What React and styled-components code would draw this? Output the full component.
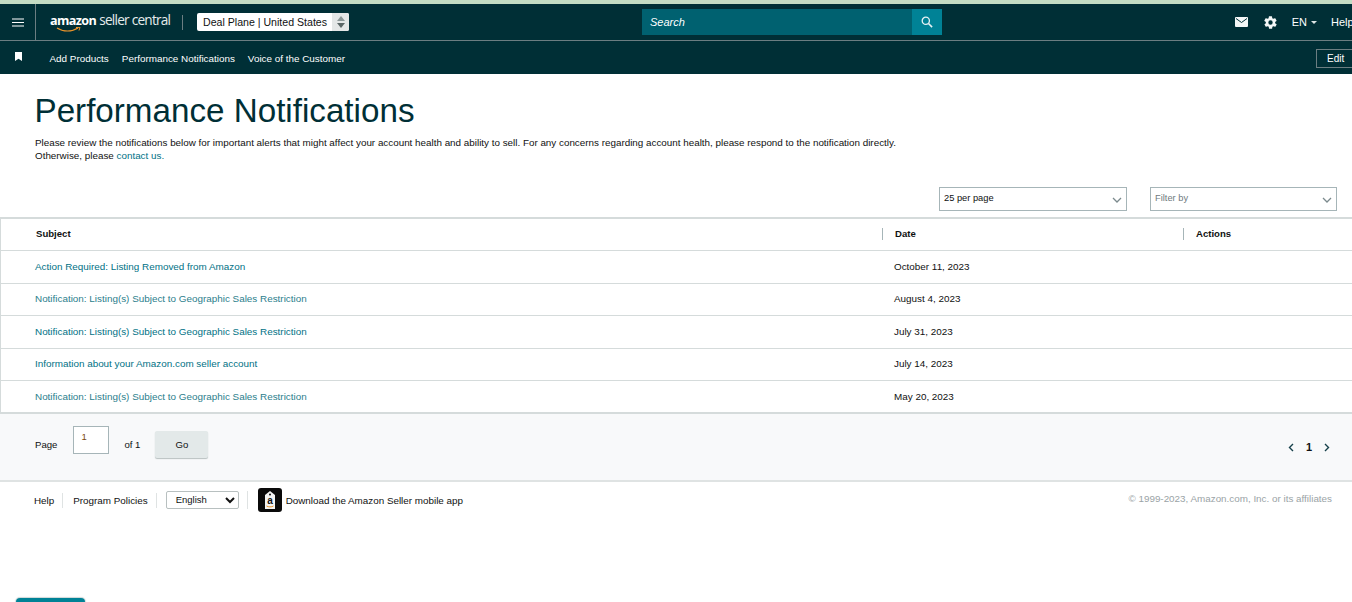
import React from "react";
import styled, { createGlobalStyle } from "styled-components";

const Global = createGlobalStyle`
  html, body { margin: 0; padding: 0; height: 100%; overflow: hidden; background: #fff; }
  body { font-family: "Liberation Sans", Arial, sans-serif; color: #002f36; }
  * { box-sizing: border-box; }
`;

const Page = styled.div`
  width: 1352px; height: 602px; overflow: hidden; position: relative;
  display: flex; flex-direction: column;
`;
const TopStrip = styled.div`height: 4px; background: #c4dcc4; flex: none;`;
const Header = styled.header`background: #002f36; color: #fff; flex: none;`;
const NavMain = styled.div`
  height: 37px; display: flex; align-items: center; position: relative;
  border-bottom: 1px solid #6c7e82;
`;
const Burger = styled.div`
  width: 36px; height: 36px; flex: none; display: flex; align-items: center; justify-content: center;
  border-right: 1px solid #6c7e82;
`;
const Logo = styled.div`
  margin-left: 14px; width: 119px; position: relative; display: flex; align-items: baseline;
  height: 24px; padding-top: 1px; line-height: 18px;
`;
const LogoStrong = styled.span`font: 700 12.6px/18px "Open Sans", sans-serif; letter-spacing: -0.6px;`;
const LogoLight = styled.span`font: 400 13.6px/18px "Open Sans", sans-serif; margin-left: 3px; color: #e6ecec; letter-spacing: -0.75px; white-space: nowrap;`;
const Smile = styled.svg`position: absolute; left: 6px; top: 17px;`;
const VDivider = styled.div`width: 1px; height: 15px; background: #6c7e82; margin-left: 13px;`;
const AccountSwitch = styled.div`
  margin-left: 14px; width: 152px; height: 18px; background: #fff; border-radius: 2px; color: #0f1111;
  display: flex; align-items: center; font-size: 10.6px; padding-left: 6px; position: relative; white-space: nowrap;
`;
const Stepper = styled.div`
  position: absolute; right: 0; top: 0; width: 17px; height: 18px; background: #e4e7e7; border-radius: 0 2px 2px 0;
  display: flex; flex-direction: column; align-items: center; justify-content: center; gap: 2px;
`;
const Tri = styled.div`
  width: 0; height: 0; border-left: 4px solid transparent; border-right: 4px solid transparent;
  ${p => p.$up ? "border-bottom: 5px solid #8b9696;" : "border-top: 5px solid #5a6666;"}
`;
const SearchBox = styled.div`
  position: absolute; left: 642px; top: 5px; width: 300px; height: 26px; display: flex; background: #006170;
`;
const SearchText = styled.div`flex: 1; font: italic 11px/26px "Liberation Sans", sans-serif; padding-left: 8px; color: #fff;`;
const SearchBtn = styled.div`width: 30px; background: #008296; display: flex; align-items: center; justify-content: center;`;
const RightTools = styled.div`
  margin-left: auto; display: flex; align-items: center; height: 100%; font-size: 11px; color: #fff;
`;
const Lang = styled.div`display: flex; align-items: center; margin-left: 14px; gap: 4px;`;
const Caret = styled.div`width: 0; height: 0; border-left: 3.5px solid transparent; border-right: 3.5px solid transparent; border-top: 3px solid #dfe5e5; margin-top: 1px;`;
const Help = styled.div`margin-left: 14px; width: 21px; overflow: hidden; white-space: nowrap;`;
const NavSub = styled.div`
  height: 33px; display: flex; align-items: center; font-size: 9.9px; position: relative;
`;
const Bookmark = styled.div`width: 36px; display: flex; justify-content: center; flex: none; margin-top: -2px;`;
const SubLinks = styled.div`display: flex; gap: 13px; margin-left: 13.5px; margin-top: 1px;`;
const EditBtn = styled.div`
  margin-left: auto; width: 36px; height: 19px; border: 1px solid #6c7e82; border-right: none;
  font-size: 10px; line-height: 17px; padding-left: 10px; margin-top: 1px;
`;

const Main = styled.main`padding: 18px 0 0 35px; flex: none; height: 143px; position: relative;`;
const Title = styled.h1`margin: 0 0 0 -0.5px; font-weight: 400; font-size: 33.2px; line-height: 38px; color: #002f36;`;
const Intro = styled.p`margin: 6px 0 0; font-size: 9.85px; line-height: 13px; color: #0f1111;`;
const A = styled.span`color: #007185;`;
const Controls = styled.div`
  position: absolute; right: 15px; top: 113px; display: flex; gap: 23px;
`;
const SelectBox = styled.div`
  height: 24px; width: ${p => p.$w}px; border: 1px solid #a6b5b8; background: #fff; position: relative;
  font-size: 9.3px; line-height: 20px; padding-left: 4px; color: ${p => p.$muted ? "#6f7a7e" : "#0f1111"};
`;
const Chev = styled.svg`position: absolute; right: 4px; top: 9px;`;

const Table = styled.section`
  flex: none; border-top: 2px solid #d5dbdb; border-left: 1px solid #d5dbdb; border-bottom: 2px solid #d5dbdb; height: 197px;
`;
const cols = "881px 301px 1fr";
const HeadRow = styled.div`
  display: grid; grid-template-columns: ${cols}; height: 32px; border-bottom: 1px solid #d5dbdb; align-items: center;
  font-size: 9.6px; font-weight: 700; color: #0f1111; padding-bottom: 2px;
`;
const HeadCell = styled.div`
  height: 12px; line-height: 12px; padding-left: ${p => p.$first ? 35 : 12}px;
  border-left: ${p => p.$first ? "none" : "1px solid #a6b5b8"};
`;
const Row = styled.div`
  display: grid; grid-template-columns: ${cols}; align-items: center; height: 32.5px; border-bottom: 1px solid #d5dbdb;
  font-size: 9.9px; padding-bottom: 1px;
  &:last-child { border-bottom: none; }
`;
const SubjectCell = styled.div`padding-left: 34px; color: ${p => p.$dim ? "#2b7e8c" : "#007185"};`;
const DateCell = styled.div`padding-left: 12px; color: #0f1111;`;

const Pager = styled.div`
  flex: none; height: 68px; background: #f8f9fa; border-bottom: 2px solid #dfe3e3; display: flex; align-items: center;
  padding: 0 22px 6px 35px; font-size: 9.6px; color: #0f1111; position: relative;
`;
const PageInput = styled.div`
  width: 36px; height: 28px; margin: -8px 0 0 16px; border: 1px solid #a6b5b8; background: #fff; padding: 4px 0 0 7px; font-size: 9.5px; line-height: 12px; color: #7a4a10;
`;
const Of = styled.span`margin-left: 15px;`;
const GoBtn = styled.div`
  width: 53px; height: 27px; margin: 0 0 0 15px; background: #e3e9e9; border-radius: 2px; text-align: center;
  line-height: 27px; box-shadow: 0 1px 1px #b8c0c0;
`;
const Pages = styled.div`
  margin-left: auto; display: flex; align-items: center; gap: 12px; font-weight: 700; font-size: 11px; margin-top: 6px;
`;

const Footer = styled.footer`
  flex: none; height: 40px; display: flex; align-items: center; padding: 0 20px 2px 34px; font-size: 9.85px; color: #0f1111;
  margin-top: -1px;
`;
const FootItem = styled.span`
  padding-right: 8px; margin-right: ${p => p.$tight ? 9 : 10}px; border-right: 1px solid #dfe3e3; line-height: 15px; display: inline-block;
`;
const LangSel = styled.div`
  width: 73px; height: 18px; border: 1px solid #b8c0c0; border-radius: 2px; padding-left: 9px; line-height: 15px;
  position: relative; background: #fff; margin-right: 8px; font-size: 9.5px;
`;
const AppIcon = styled.div`
  width: 24px; height: 24px; background: #0a0a0a; border-radius: 3px; margin: 0 4px 0 10px; display: flex; align-items: center; justify-content: center;
`;
const VLine = styled.div`width: 1px; height: 18px; background: #dfe3e3;`;
const Copy = styled.div`margin-left: auto; color: #9aa3a6; margin-top: -4px;`;
const FloatBtn = styled.div`
  position: absolute; left: 16px; bottom: -20px; width: 69px; height: 24px; border-radius: 4px; background: #008296;
  box-shadow: 0 0 1px 1px #cfd8d8;
`;

const rows = [
  ["Action Required: Listing Removed from Amazon", "October 11, 2023"],
  ["Notification: Listing(s) Subject to Geographic Sales Restriction", "August 4, 2023", true],
  ["Notification: Listing(s) Subject to Geographic Sales Restriction", "July 31, 2023"],
  ["Information about your Amazon.com seller account", "July 14, 2023"],
  ["Notification: Listing(s) Subject to Geographic Sales Restriction", "May 20, 2023", true],
];

const ChevDown = ({ c = "#7b8a8d" }) => (
  <Chev width="10" height="7" viewBox="0 0 10 7"><path d="M1 1l4 4 4-4" fill="none" stroke={c} strokeWidth="1.3" /></Chev>
);

export default function App() {
  return (
    <Page>
      <Global />
      <TopStrip />
      <Header>
        <NavMain>
          <Burger>
            <svg width="12" height="9" viewBox="0 0 12 9"><path d="M0 1h12M0 4.5h12M0 8h12" stroke="#fff" strokeWidth="1.2" /></svg>
          </Burger>
          <Logo>
            <LogoStrong>amazon</LogoStrong>
            <LogoLight>seller central</LogoLight>
            <Smile width="26" height="6" viewBox="0 0 26 6">
              <path d="M1 1c6 4 15 4 21 0" fill="none" stroke="#f0962a" strokeWidth="1.2" />
              <path d="M20 0.5l4 -.2-1 3.2" fill="none" stroke="#f0962a" strokeWidth="1" />
            </Smile>
          </Logo>
          <VDivider />
          <AccountSwitch>
            Deal Plane | United States
            <Stepper><Tri $up /><Tri /></Stepper>
          </AccountSwitch>
          <SearchBox>
            <SearchText>Search</SearchText>
            <SearchBtn>
              <svg width="12" height="12" viewBox="0 0 12 12"><circle cx="4.8" cy="4.8" r="3.6" fill="none" stroke="#e8f2f4" strokeWidth="1.3" /><path d="M7.5 7.5l3.6 3.6" stroke="#e8f2f4" strokeWidth="1.6" /></svg>
            </SearchBtn>
          </SearchBox>
          <RightTools>
            <svg width="13" height="10" viewBox="0 0 13 10"><rect width="13" height="10" rx="1" fill="#f4f7f7" /><path d="M1 1.5l5.5 4 5.5-4" fill="none" stroke="#002f36" strokeWidth="1" /></svg>
            <svg width="15" height="15" viewBox="0 0 24 24" style={{ marginLeft: 15 }}>
              <path fill="#f4f7f7" d="M19.4 13a7.6 7.6 0 0 0 0-2l2.1-1.6a.5.5 0 0 0 .1-.7l-2-3.4a.5.5 0 0 0-.6-.2l-2.5 1a7.4 7.4 0 0 0-1.7-1l-.4-2.7a.5.5 0 0 0-.5-.4h-4a.5.5 0 0 0-.5.4l-.4 2.7a7.4 7.4 0 0 0-1.7 1l-2.5-1a.5.5 0 0 0-.6.2l-2 3.4a.5.5 0 0 0 .1.7L4.6 11a7.6 7.6 0 0 0 0 2l-2.1 1.6a.5.5 0 0 0-.1.7l2 3.4c.1.2.4.3.6.2l2.5-1c.5.4 1.1.7 1.7 1l.4 2.7c0 .2.2.4.5.4h4c.3 0 .5-.2.5-.4l.4-2.7c.6-.3 1.2-.6 1.7-1l2.5 1c.2.1.5 0 .6-.2l2-3.4a.5.5 0 0 0-.1-.7zM12 15.5a3.5 3.5 0 1 1 0-7 3.5 3.5 0 0 1 0 7z" />
            </svg>
            <Lang>EN<Caret /></Lang>
            <Help>Help</Help>
          </RightTools>
        </NavMain>
        <NavSub>
          <Bookmark>
            <svg width="7" height="9" viewBox="0 0 7 9"><path d="M0 0h7v9L3.5 6.8 0 9z" fill="#fff" /></svg>
          </Bookmark>
          <SubLinks>
            <span>Add Products</span>
            <span>Performance Notifications</span>
            <span>Voice of the Customer</span>
          </SubLinks>
          <EditBtn>Edit</EditBtn>
        </NavSub>
      </Header>
      <Main>
        <Title>Performance Notifications</Title>
        <Intro>
          Please review the notifications below for important alerts that might affect your account health and ability to sell. For any concerns regarding account health, please respond to the notification directly.<br />
          Otherwise, please <A>contact us.</A>
        </Intro>
        <Controls>
          <SelectBox $w={188}>25 per page<ChevDown /></SelectBox>
          <SelectBox $w={187} $muted>Filter by<ChevDown /></SelectBox>
        </Controls>
      </Main>
      <Table>
        <HeadRow>
          <HeadCell $first>Subject</HeadCell>
          <HeadCell>Date</HeadCell>
          <HeadCell>Actions</HeadCell>
        </HeadRow>
        {rows.map(([s, d, dim], i) => (
          <Row key={i}>
            <SubjectCell $dim={dim}>{s}</SubjectCell>
            <DateCell>{d}</DateCell>
            <div />
          </Row>
        ))}
      </Table>
      <Pager>
        Page
        <PageInput>1</PageInput>
        <Of>of 1</Of>
        <GoBtn>Go</GoBtn>
        <Pages>
          <svg width="6" height="9" viewBox="0 0 6 9"><path d="M5 1L1.5 4.5 5 8" fill="none" stroke="#16404a" strokeWidth="1.4" /></svg>
          <span>1</span>
          <svg width="6" height="9" viewBox="0 0 6 9"><path d="M1 1l3.5 3.5L1 8" fill="none" stroke="#16404a" strokeWidth="1.4" /></svg>
        </Pages>
      </Pager>
      <Footer>
        <FootItem>Help</FootItem>
        <FootItem $tight>Program Policies</FootItem>
        <LangSel>
          English
          <Chev width="10" height="7" viewBox="0 0 10 7" style={{ top: 5, right: 3 }}><path d="M1 1l4 4 4-4" fill="none" stroke="#111" strokeWidth="2" /></Chev>
        </LangSel>
        <VLine />
        <AppIcon>
          <svg width="16" height="20" viewBox="0 0 16 20">
            <path d="M3 5l5-4 5 4v14H3z" fill="#f4f4f4" />
            <circle cx="8" cy="4.5" r="1" fill="#0a0a0a" />
            <text x="8" y="14" textAnchor="middle" fontSize="10" fontWeight="700" fontFamily="Liberation Sans" fill="#111">a</text>
            <path d="M4.5 16c2 1.2 5 1.2 7 0" fill="none" stroke="#e8952c" strokeWidth="1" />
          </svg>
        </AppIcon>
        <span>Download the Amazon Seller mobile app</span>
        <Copy>© 1999-2023, Amazon.com, Inc. or its affiliates</Copy>
      </Footer>
      <FloatBtn />
    </Page>
  );
}
